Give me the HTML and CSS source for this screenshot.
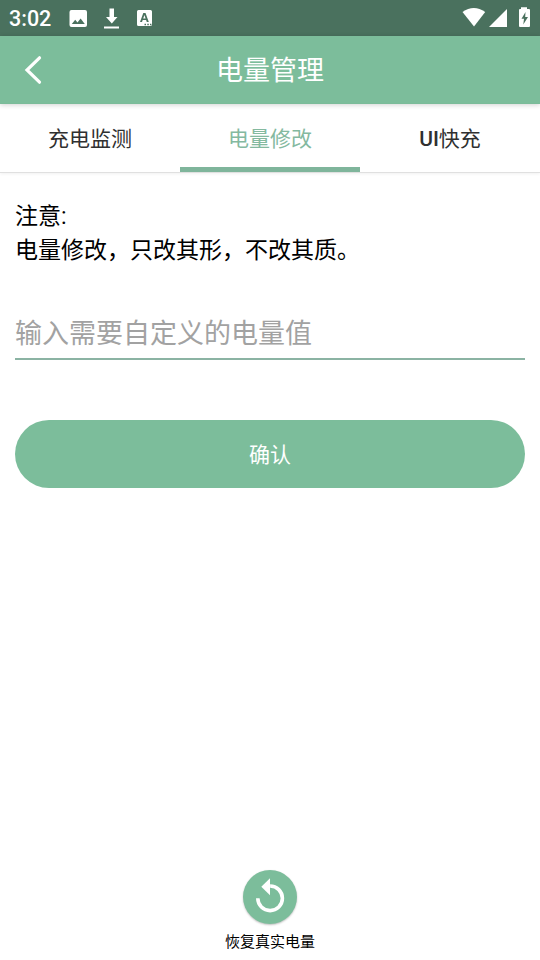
FILE: index.html
```html
<!DOCTYPE html>
<html lang="zh-CN">
<head>
<meta charset="utf-8">
<title>电量管理</title>
<link rel="stylesheet" href="styles.css">
</head>
<body>
<div class="statusbar">
  <span class="clock">3:02</span>
  <svg class="notifications" width="90" height="36" viewBox="0 0 90 36" fill="#fff">
    <path fill-rule="evenodd" d="M2.5 10H16Q18 10 18 12V25Q18 27 16 27H2.5Q.5 27 .5 25V12Q.5 10 2.5 10ZM2.8 24H15.8L11.6 18.5L8.5 22.4L6.2 19.8Z"/>
    <path d="M40.5 8.5H45V17H48.5L42.8 23.5L37 17H40.5ZM35 26.5H50V28.5H35Z"/>
    <path fill-rule="evenodd" d="M69.5 10H81.5Q83 10 83 11.5V24.5Q83 26 81.5 26H69.5Q68 26 68 24.5V11.5Q68 10 69.5 10ZM74.3 13L71 22H73L73.7 20H77.1L77.8 22H79.8L76.5 13ZM74.2 18.4L75.4 15L76.6 18.4ZM75.5 23.7H77V25.2H75.5ZM78.3 23.7H79.8V25.2H78.3ZM81 23.7H82.4V25.2H81Z"/>
  </svg>
  <svg class="system" width="78" height="36" viewBox="0 0 78 36" fill="#fff">
    <path d="M.5 12Q11.8 4 23.2 12L12 26.6Z"/>
    <path d="M27 27L45 9V27Z"/>
    <path fill-rule="evenodd" d="M59 9V7.3H65V9H67Q68 9 68 10V26Q68 27 67 27H58Q57 27 57 26V10Q57 9 58 9ZM63.5 12L59.5 18.7H62L61.3 24.5L66 17H63.2Z"/>
  </svg>
</div>
<header class="appbar">
  <svg class="back" width="24" height="34" viewBox="0 0 24 34" fill="none" stroke="#fff" stroke-width="3.2" stroke-linecap="round"><path d="M17.5 4.8L5 17L17.5 29.2"/></svg>
  <h1>电量管理</h1>
</header>
<nav class="tabs">
  <div class="tab">充电监测</div>
  <div class="tab active">电量修改</div>
  <div class="tab"><span class="latin">UI</span>快充</div>
</nav>
<main>
  <p class="notice">注意:<br>电量修改，只改其形，不改其质。</p>
  <input class="level" type="text" placeholder="输入需要自定义的电量值">
  <button class="confirm">确认</button>
</main>
<footer>
  <div class="restore">
    <svg width="54" height="54" viewBox="0 0 54 54"><path d="M14.8 28.3A12.3 12.3 0 1 0 27.1 16" fill="none" stroke="#fff" stroke-width="3.6"/><path d="M27 8.3V25.2L18.3 16.8Z" fill="#fff"/></svg>
  </div>
  <span class="caption">恢复真实电量</span>
</footer>
</body>
</html>
```
FILE: styles.css
```css
* { box-sizing: border-box; }
body {
  margin: 0;
  height: 960px;
  display: flex;
  flex-direction: column;
  background: #fff;
  color: #000;
  font-family: Roboto, "Noto Sans CJK SC", sans-serif;
}
.statusbar {
  height: 36px;
  flex: none;
  display: flex;
  align-items: center;
  padding-left: 9px;
  background: #4a715e;
  color: #fff;
}
.clock {
  width: 60px;
  padding-top: 2px;
  font-size: 21.5px;
  font-weight: 500;
  line-height: 34px;
}
.system { margin-left: auto; }
.appbar {
  height: 68px;
  flex: none;
  display: grid;
  grid-template-columns: 60px 1fr 60px;
  align-items: center;
  background: #7cbd9b;
  color: #fff;
  box-shadow: 0 1px 5px rgba(0, 0, 0, .18);
}
.back { margin-left: 22px; }
.appbar h1 {
  grid-column: 2;
  margin: 0;
  padding-top: 2px;
  text-align: center;
  font-size: 27px;
  font-weight: 400;
  line-height: 66px;
}
.tabs {
  height: 69px;
  flex: none;
  display: grid;
  grid-template-columns: repeat(3, 1fr);
  border-bottom: 1px solid #e0e0e0;
  box-shadow: 0 1px 3px rgba(0, 0, 0, .06);
}
.tab {
  height: 68px;
  border-bottom: 5px solid transparent;
  padding-top: 4px;
  color: #303030;
  font-size: 21px;
  line-height: 63px;
  text-align: center;
}
.latin { font-weight: 500; }
.tab.active {
  border-color: #7fb59b;
  color: #84b99f;
}
main {
  flex: 1;
  display: flex;
  flex-direction: column;
  padding: 27px 15px 0;
}
.notice {
  margin: 0;
  font-size: 23px;
  line-height: 34px;
}
.level {
  height: 54px;
  margin: 38px 0 60px;
  padding: 4px 0 0;
  border: 0;
  border-bottom: 2px solid #8bb3a3;
  border-radius: 0;
  background: none;
  font: 27px/48px Roboto, "Noto Sans CJK SC", sans-serif;
}
.level::placeholder { color: #a2a2a2; opacity: 1; }
.confirm {
  height: 68px;
  padding: 2px 0 0;
  border: 0;
  border-radius: 34px;
  background: #7cbd9b;
  color: #fff;
  font: 21px/66px Roboto, "Noto Sans CJK SC", sans-serif;
}
footer {
  height: 90px;
  display: flex;
  flex-direction: column;
  align-items: center;
}
.restore {
  width: 54px;
  height: 54px;
  border-radius: 50%;
  background: #7cbd9b;
  box-shadow: 0 1px 2px rgba(0, 0, 0, .25);
}
.caption {
  margin-top: 7px;
  font-size: 15px;
  line-height: 22px;
}
```
